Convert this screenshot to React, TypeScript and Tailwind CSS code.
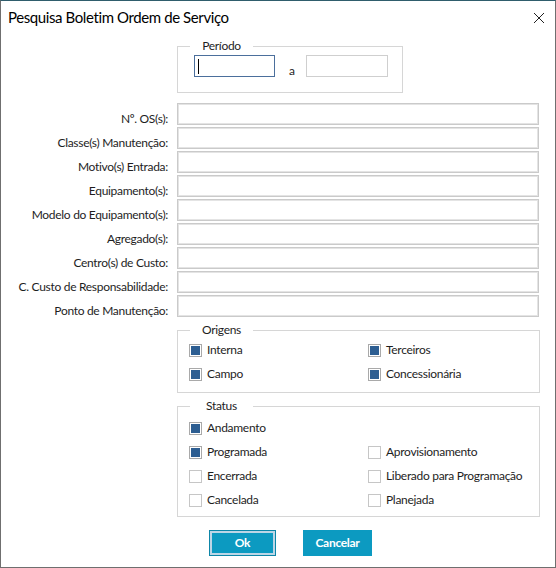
import React from "react";

const fields = [
  "Nº. OS(s):",
  "Classe(s) Manutenção:",
  "Motivo(s) Entrada:",
  "Equipamento(s):",
  "Modelo do Equipamento(s):",
  "Agregado(s):",
  "Centro(s) de Custo:",
  "C. Custo de Responsabilidade:",
  "Ponto de Manutenção:",
];

function Check({ label, checked }: { label: string; checked?: boolean }) {
  return (
    <div className="h-[24px] flex items-center whitespace-nowrap">
      <span
        className={
          "w-[13px] h-[13px] shrink-0 border p-[1px] bg-white " +
          (checked ? "border-[#a9a9a9]" : "border-[#c6c6c6]")
        }
      >
        {checked && <span className="block w-full h-full bg-[#2d5e92]" />}
      </span>
      <span className="ml-[5px]">{label}</span>
    </div>
  );
}

function Legend({ children }: { children: React.ReactNode }) {
  return (
    <legend className="ml-[12px] p-0 leading-[16px]">
      <span className="block w-[63px] text-center">{children}</span>
    </legend>
  );
}

export default function App() {
  return (
    <div className="w-[556px] h-[568px] bg-white border border-[#6f6f6f] border-t-[#2f5d6c] flex flex-col font-['Lato',sans-serif] text-[12px] tracking-[-0.3px] text-[#1e1e1e]">
      <div className="h-[37px] shrink-0 flex items-center justify-between pl-[7px] pr-[10px]">
        <span className="text-[15px] tracking-[-0.4px] text-black leading-[20px] -mt-[5px]">Pesquisa Boletim Ordem de Serviço</span>
        <svg width="12" height="12" viewBox="0 0 12 12" className="-mt-[4px]">
          <path d="M1 1L11 11M11 1L1 11" stroke="#222" strokeWidth="1" />
        </svg>
      </div>

      <fieldset className="ml-[176px] w-[226px] h-[55px] border border-[#d6d6d6] shrink-0">
        <Legend>Período</Legend>
        <div className="flex items-start pl-[16px] pt-[1px]">
          <div className="w-[81px] h-[22px] border border-[#4b6f9c] flex items-center pl-[3px]">
            <span className="w-[1px] h-[15px] bg-black" />
          </div>
          <span className="ml-[14px] mr-[11px] mt-[8px] leading-[16px]">a</span>
          <div className="w-[82px] h-[22px] border border-[#cfcfcf]" />
        </div>
      </fieldset>

      <div className="mt-[10px] grid grid-cols-[167px_362px] gap-x-[9px] gap-y-[2px] shrink-0">
        {fields.map((f) => (
          <React.Fragment key={f}>
            <div className="h-[22px] text-right leading-[16px] pt-[8px] whitespace-nowrap">{f}</div>
            <div className="h-[22px] border border-[#cacaca] shadow-[inset_0_0_0_1px_#e4e4e4]" />
          </React.Fragment>
        ))}
      </div>

      <fieldset className="mt-[5px] ml-[176px] w-[363px] h-[71px] border border-[#d6d6d6] shrink-0">
        <Legend>Origens</Legend>
        <div className="grid grid-cols-[179px_1fr] pl-[11px]">
          <Check label="Interna" checked />
          <Check label="Terceiros" checked />
          <Check label="Campo" checked />
          <Check label="Concessionária" checked />
        </div>
      </fieldset>

      <fieldset className="mt-[5px] ml-[176px] w-[363px] h-[119px] border border-[#d6d6d6] shrink-0">
        <Legend>Status</Legend>
        <div className="grid grid-cols-[179px_1fr] pl-[11px] pt-[2px]">
          <Check label="Andamento" checked />
          <div />
          <Check label="Programada" checked />
          <Check label="Aprovisionamento" />
          <Check label="Encerrada" />
          <Check label="Liberado para Programação" />
          <Check label="Cancelada" />
          <Check label="Planejada" />
        </div>
      </fieldset>

      <div className="mt-[13px] flex pl-[208px] gap-[27px]">
        <button className="w-[67px] h-[26px] border border-[#0d86a8] bg-[#0c9ac1] shadow-[inset_0_0_0_2px_#bcd6e6] text-white font-bold text-[12px]">
          Ok
        </button>
        <button className="w-[69px] h-[26px] bg-[#0c9ac1] text-white font-bold text-[12px]">
          Cancelar
        </button>
      </div>
    </div>
  );
}
